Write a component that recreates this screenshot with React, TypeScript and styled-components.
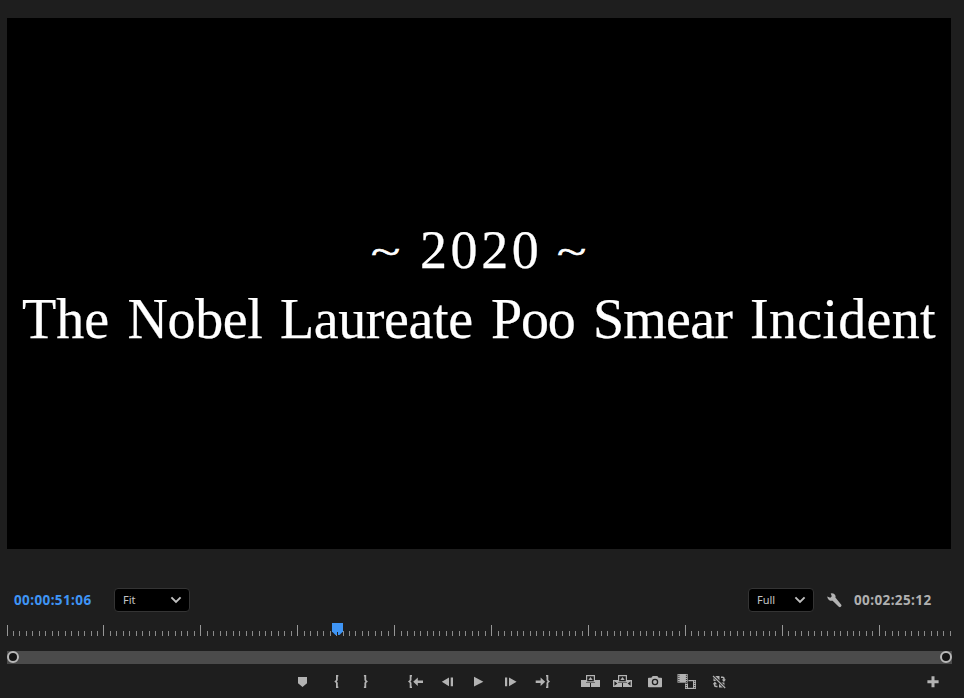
import React from "react";
import styled, { createGlobalStyle } from "styled-components";

const GlobalStyle = createGlobalStyle`
  html, body { margin: 0; padding: 0; background: #1e1e1e; overflow: hidden; }
  * { box-sizing: border-box; }
  button { appearance: none; border: 0; padding: 0; background: none; color: inherit; }
`;

const Panel = styled.main`
  display: flex;
  flex-direction: column;
  width: 964px;
  height: 698px;
  padding-top: 18px;
  background: #1e1e1e;
  color: #b3b3b3;
  font-family: "Noto Sans", sans-serif;
`;

const Viewer = styled.section`
  display: flex;
  flex-direction: column;
  width: 944px;
  height: 531px;
  margin-left: 7px;
  padding-top: 198px;
  background: #000;
  color: #fff;
  font-family: "Liberation Serif", serif;
`;

const TitleLine = styled.div<{ $size: number; $indent: number }>`
  display: flex;
  height: 69px;
  padding-left: ${(p) => p.$indent}px;
  font-size: ${(p) => p.$size}px;
  line-height: 69px;
  white-space: pre;
  -webkit-text-stroke: 0.25px #fff;
`;

const Word = styled.span<{ $width: number; $spacing: number }>`
  flex: none;
  width: ${(p) => p.$width}px;
  letter-spacing: ${(p) => p.$spacing}px;
`;

const Tilde = styled.span<{ $width: number }>`
  flex: none;
  width: ${(p) => p.$width}px;
  transform: scaleY(0.72);
  transform-origin: 50% 37px;
  -webkit-text-stroke: 0.9px #fff;
`;

const Controls = styled.div`
  display: flex;
  align-items: center;
  height: 24px;
  margin-top: 39px;
  padding: 0 10px 0 14px;
`;

const Timecode = styled.span<{ $active?: boolean }>`
  width: 100px;
  font-size: 13.5px;
  font-weight: 700;
  line-height: 24px;
  letter-spacing: 0.4px;
  color: ${(p) => (p.$active ? "#3f95f5" : "#b0b0b0")};
`;

const Select = styled.button<{ $width: number }>`
  display: flex;
  align-items: center;
  justify-content: space-between;
  width: ${(p) => p.$width}px;
  height: 24px;
  padding: 0 7px 0 8px;
  border: 1px solid #343434;
  border-radius: 4px;
  background: #000;
  color: #c4c4c4;
  font-family: "Noto Sans", sans-serif;
  font-size: 11px;
  line-height: 22px;
`;

const Spacer = styled.div`
  flex: 1;
`;

const Wrench = styled.button`
  display: flex;
  width: 40px;
  padding-left: 13px;
`;

const Ruler = styled.div`
  position: relative;
  height: 16px;
  margin: 10px 0 0 7px;
`;

const Playhead = styled.svg`
  position: absolute;
  left: 325px;
  top: 1px;
`;

const ZoomBar = styled.div`
  display: flex;
  align-items: flex-start;
  justify-content: space-between;
  width: 945px;
  height: 13px;
  margin: 13px 0 0 7px;
  background: #4b4b4b;
`;

const Handle = styled.span`
  width: 12px;
  height: 12px;
  border: 2px solid #b8b8b8;
  border-radius: 50%;
  background: #141414;
`;

const Transport = styled.div`
  display: flex;
  height: 24px;
  margin-top: 6px;
  padding-left: 290px;
`;

const IconButton = styled.button<{ $gap: number }>`
  display: block;
  flex: none;
  width: 26px;
  height: 24px;
  margin-left: ${(p) => p.$gap}px;
  svg { display: block; fill: #b3b3b3; }
`;

const Chevron = () => (
  <svg width="12" height="8" viewBox="0 0 12 8" fill="none" stroke="#c0c0c0" strokeWidth="1.9">
    <path d="M1.4 1.4 6 5.9l4.6-4.5" />
  </svg>
);

const BRACE_LEFT = "M4 0H1.7v5L0 6.5 1.7 8v5H4v-1.4h-.5V7.7l-1-1.2 1-1.2V1.4H4z";
const BRACE_RIGHT = "M0 0h2.3v5L4 6.5 2.3 8v5H0v-1.4h.5V7.7l1-1.2-1-1.2V1.4H0z";

const icons: { name: string; gap: number; art: React.ReactNode }[] = [
  { name: "Add marker", gap: 0, art: <path d="M8 7h9v6.3L12.5 17 8 13.3z" /> },
  { name: "Mark in", gap: 7, art: <path transform="translate(11.3 5)" d={BRACE_LEFT} /> },
  { name: "Mark out", gap: 3, art: <path transform="translate(11.9 5)" d={BRACE_RIGHT} /> },
  {
    name: "Go to in",
    gap: 24,
    art: (
      <>
        <path transform="translate(6 5)" d={BRACE_LEFT} />
        <path d="m11.2 11.7 4.6-4.2v3H21V13h-5.2v3z" />
      </>
    ),
  },
  { name: "Step back", gap: 6, art: <path d="M15 7.4v8.8l-7.2-4.4zM16.7 7.4H19v8.8h-2.3z" /> },
  { name: "Play", gap: 5, art: <path d="M9 6.8v9.8l9.4-4.9z" /> },
  { name: "Step forward", gap: 6, art: <path d="M8 7.4h2.2v8.8H8zM12 7.4v8.8l7.6-4.4z" /> },
  {
    name: "Go to out",
    gap: 7,
    art: (
      <>
        <path d="M15.2 11.7 10.6 7.5v3H5.7V13h4.9v3z" />
        <path transform="translate(16 5)" d={BRACE_RIGHT} />
      </>
    ),
  },
  {
    name: "Lift",
    gap: 21,
    art: (
      <>
        <path d="M4 10h5v3h4v4H4zM18 10h5v7h-9v-4h4z" />
        <path fillRule="evenodd" d="M9 5h9v7.5H9zm1.2 1.2v5.1h6.6V6.2z" />
        <path d="m13.5 7 2.2 3h-4.4z" />
      </>
    ),
  },
  {
    name: "Extract",
    gap: 6,
    art: (
      <>
        <path fillRule="evenodd" d="M4 10h5v3h4v4H4zm1.4 1.3v4.5l3-2.2zM18 10h5v7h-9v-4h4zm3.6 1.3-3 2.3 3 2.2z" />
        <path fillRule="evenodd" d="M9 5h9v7.5H9zm1.2 1.2v5.1h6.6V6.2z" />
        <path d="m13.5 7 2.2 3h-4.4z" />
      </>
    ),
  },
  {
    name: "Export frame",
    gap: 7,
    art: (
      <>
        <path d="M6.8 7.7h2.5L10.7 6h4.6l1.4 1.7h2.5q.8 0 .8.8v8q0 .8-.8.8H6.8q-.8 0-.8-.8v-8q0-.8.8-.8z" />
        <circle cx="13" cy="12" r="2.6" fill="#b3b3b3" stroke="#1e1e1e" strokeWidth="1.3" />
      </>
    ),
  },
  {
    name: "Comparison view",
    gap: 5,
    art: (
      <>
        <path d="M12 10h11v9H12z" />
        <path d="M15 11.2h5v6.6h-5z" fill="#1e1e1e" />
        <path d="M13.3 10.8v8M21.7 10.8v8" stroke="#1e1e1e" strokeWidth="1" strokeDasharray="1 1.1" />
        <path d="M4 3.5h11.4v9.9H4z" fill="#1e1e1e" />
        <path d="M4.5 4h10.2v8.7H4.5z" />
        <path d="M5.9 4.8v8M13.4 4.8v8" stroke="#1e1e1e" strokeWidth="1" strokeDasharray="1 1.1" />
      </>
    ),
  },
  {
    name: "Toggle proxies",
    gap: 7,
    art: (
      <>
        <path d="M7.5 6h6v5h-6zM13 12.6h5.4v5H13z" />
        <path
          d="M15 7.2h1.6q1.4 0 1.4 1.5v1.6M11.5 16.6H10q-1.4 0-1.4-1.5v-1.6"
          fill="none" stroke="#b3b3b3" strokeWidth="1.5"
        />
        <path d="m15.8 9.6h4.2l-2.1 2.4zM6.8 14.2H11l-2.1-2.6z" />
        <path d="m7 5.8 12.4 12.4" stroke="#1e1e1e" strokeWidth="2.9" />
        <path d="m7 6 12.2 12" stroke="#b3b3b3" strokeWidth="1.1" />
      </>
    ),
  },
  { name: "Button editor", gap: 188, art: <path d="M11.5 6.2h3v4.1h4.1v2.9h-4.1v4.1h-3v-4.1H7.4v-2.9h4.1z" /> },
];

const words = [
  { text: "The", width: 105.5, spacing: 0 },
  { text: "Nobel", width: 152.5, spacing: -0.4 },
  { text: "Laureate", width: 211, spacing: -0.4 },
  { text: "Poo", width: 102, spacing: -1.2 },
  { text: "Smear", width: 157, spacing: -0.8 },
  { text: "Incident", width: 190, spacing: 0.3 },
];

const ticks = Array.from({ length: 147 }, (_, i) => ({
  x: Math.floor(i * 6.462),
  major: i % 15 === 0,
}));

export default function App() {
  return (
    <>
      <GlobalStyle />
      <Panel>
        <Viewer>
          <TitleLine $size={54} $indent={364}>
            <Tilde $width={49}>~</Tilde>
            <Word $width={137} $spacing={3.6}>2020</Word>
            <Tilde $width={40}>~</Tilde>
          </TitleLine>
          <TitleLine $size={56} $indent={15}>
            {words.map((w) => (
              <Word key={w.text} $width={w.width} $spacing={w.spacing}>{w.text}</Word>
            ))}
          </TitleLine>
        </Viewer>
        <Controls>
          <Timecode $active>00:00:51:06</Timecode>
          <Select $width={76}>Fit<Chevron /></Select>
          <Spacer />
          <Select $width={66}>Full<Chevron /></Select>
          <Wrench aria-label="Settings">
            <svg width="15" height="15" viewBox="0 0 15 15" fill="#b3b3b3">
              <path d="M.2 3.6 3.3 4.7l1.5-1.5L3.7.4Q6-.1 7.7 1.4q1.3 1.4.7 3.2l5.7 6.9q.8 1.1-.1 2.1-1.1 1-2.2.1L5.6 7.7Q3.6 8.2 1.9 6.9.3 5.6.2 3.6z" />
            </svg>
          </Wrench>
          <Timecode>00:02:25:12</Timecode>
        </Controls>
        <Ruler>
          <svg width="944" height="16" shapeRendering="crispEdges" display="block">
            {ticks.map((t) => (
              <rect key={t.x} x={t.x} y={t.major ? 3 : 9} width="1" height={t.major ? 11 : 5} fill={t.major ? "#969696" : "#8a8a8a"} />
            ))}
          </svg>
          <Playhead width="11" height="13" viewBox="0 0 11 13">
            <path d="M0 0h11v8.5L7.5 12h-4L0 8.5z" fill="#3f95f5" />
            <path d="M5.5 9v4" stroke="#1e1e1e" />
          </Playhead>
        </Ruler>
        <ZoomBar><Handle /><Handle /></ZoomBar>
        <Transport>
          {icons.map((icon) => (
            <IconButton key={icon.name} $gap={icon.gap} aria-label={icon.name}>
              <svg width="26" height="24" viewBox="0 0 26 24">{icon.art}</svg>
            </IconButton>
          ))}
        </Transport>
      </Panel>
    </>
  );
}
